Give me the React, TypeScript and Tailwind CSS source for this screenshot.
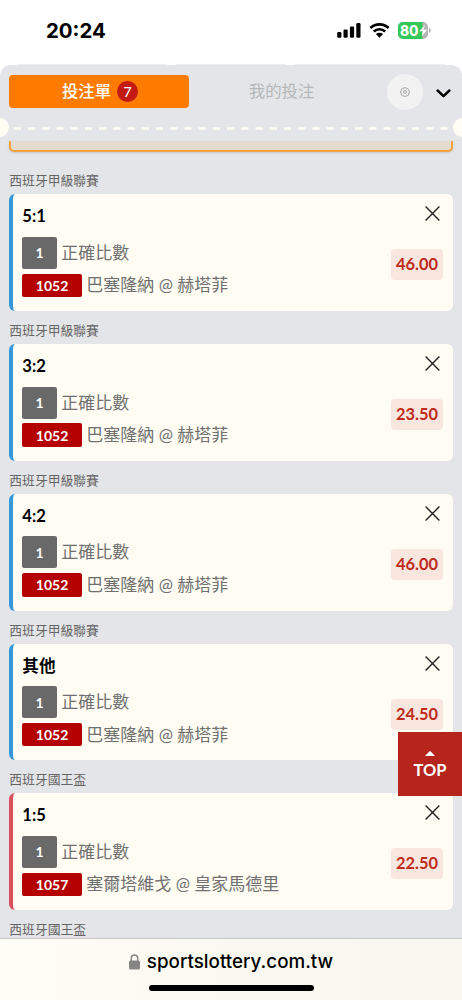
import React from "react";

type Bet = { league: string; pick: string; code: string; match: string; odds: string; accent: string };

const LA_LIGA = "西班牙甲級聯賽";
const COPA = "西班牙國王盃";
const BLUE = "border-[#3498db]";
const RED = "border-[#d9505c]";

const bets: Bet[] = [
  { league: LA_LIGA, pick: "5:1", code: "1052", match: "巴塞隆納 @ 赫塔菲", odds: "46.00", accent: BLUE },
  { league: LA_LIGA, pick: "3:2", code: "1052", match: "巴塞隆納 @ 赫塔菲", odds: "23.50", accent: BLUE },
  { league: LA_LIGA, pick: "4:2", code: "1052", match: "巴塞隆納 @ 赫塔菲", odds: "46.00", accent: BLUE },
  { league: LA_LIGA, pick: "其他", code: "1052", match: "巴塞隆納 @ 赫塔菲", odds: "24.50", accent: BLUE },
  { league: COPA, pick: "1:5", code: "1057", match: "塞爾塔維戈 @ 皇家馬德里", odds: "22.50", accent: RED },
];

function StatusBar() {
  return (
    <header className="flex h-16 shrink-0 items-start justify-between bg-white pl-[46px] pr-[31px] pt-[18px] font-['Inter','Liberation_Sans',sans-serif]">
      <span className="text-[20.4px] font-bold leading-[26px] text-black">20:24</span>
      <div className="flex h-[25px] items-center gap-[8px]">
        <svg className="h-[15px] w-[24px]" viewBox="0 0 24 15">
          <rect x="0.2" y="9" width="4.2" height="5.8" rx="1.2" />
          <rect x="6.5" y="6.6" width="4.2" height="8.2" rx="1.2" />
          <rect x="12.9" y="3.4" width="4.2" height="11.4" rx="1.2" />
          <rect x="19.3" y="0" width="4.2" height="14.8" rx="1.2" />
        </svg>
        <svg className="h-[15px] w-[21px]" viewBox="0 0 21 15">
          <g fill="none" stroke="#000" strokeWidth="2.7">
            <path d="M1.4 5.1C6.6 .2 14.4 .2 19.6 5.1" />
            <path d="M4.8 8.5C8 5.5 13 5.5 16.2 8.5" />
          </g>
          <path d="M10.5 14.7 6.9 11.1C8.9 9.4 12.1 9.4 14.1 11.1Z" />
        </svg>
        <svg className="h-[17px] w-[33px]" viewBox="0 0 33 17">
          <defs>
            <clipPath id="cell"><rect width="30" height="17" rx="5" /></clipPath>
          </defs>
          <g clipPath="url(#cell)">
            <rect width="30" height="17" fill="#b5b5b5" />
            <rect width="24.5" height="17" fill="#34c759" />
          </g>
          <path d="M31 5.8c2.3.9 2.3 4.2 0 5.2Z" fill="#b5b5b5" />
          <text x="2" y="13.6" fill="#fff" fontSize="14.5" fontWeight="800" textLength="18.5" lengthAdjust="spacingAndGlyphs">80</text>
          <path d="M27 3.2 21.3 9.3H24.8L23.6 14.2 29.3 7.8H25.6Z" fill="#fff" />
        </svg>
      </div>
    </header>
  );
}

function Gear() {
  return (
    <svg className="size-[10px]" viewBox="0 0 20 20" fill="none" stroke="#9a9a9a" strokeWidth="1.7">
      <path d="M8.3 1h3.4l.6 2.3 1.2.5 2-1.2 2.2 2.2-1.1 2 .5 1.3 2.2.5v3.2l-2.2.6-.5 1.2 1.1 2-2.2 2.2-2-1.1-1.2.5-.6 2.2H8.3l-.6-2.2-1.2-.5-2 1.1-2.2-2.2 1.1-2-.5-1.2-2.2-.6V8.6l2.2-.5.5-1.3-1.1-2 2.2-2.2 2 1.2 1.2-.5Z" />
      <circle cx="10" cy="10" r="3" />
    </svg>
  );
}

function Tabs() {
  return (
    <div className="flex h-[53px] shrink-0 items-center rounded-t-[11px] bg-[#e4e5e8] pl-[9.3px] pr-[11px]">
      <button className="flex h-[33px] w-[180px] items-center justify-center gap-[6px] rounded-[4px] bg-[#ff7b00] pl-[1.5px] text-[16.4px] font-medium text-white">
        投注單
        <span className="flex size-[21px] items-center justify-center rounded-full bg-[#c31b13] text-[14px]">7</span>
      </button>
      <button className="w-[185px] text-center text-[16.4px] font-normal text-[#b6b7b9]">我的投注</button>
      <button className="ml-[12.5px] flex size-[36px] shrink-0 items-center justify-center rounded-full bg-[#f2f2f2]">
        <Gear />
      </button>
      <svg className="ml-[13.5px] mt-1 h-[9px] w-[15px] shrink-0" viewBox="0 0 15 9" fill="none" stroke="#050505" strokeWidth="2.5" strokeLinecap="round" strokeLinejoin="round">
        <path d="M1.6 1.5 7.5 7.2 13.4 1.5" />
      </svg>
    </div>
  );
}

function Perforation() {
  return (
    <div className="flex h-[19px] shrink-0 items-center overflow-hidden">
      <span className="-ml-[9.7px] size-[19px] shrink-0 rounded-full bg-[#fffdf3]" />
      <svg className="mt-[1px] h-[3px] min-w-0 flex-1" preserveAspectRatio="none">
        <line x1="4.8" y1="1.5" x2="440" y2="1.5" stroke="#fffdf3" strokeWidth="2.6" strokeDasharray="7.1 7.12" />
      </svg>
      <span className="-mr-[9.7px] size-[19px] shrink-0 rounded-full bg-[#fffdf3]" />
    </div>
  );
}

function BetCard({ bet }: { bet: Bet }) {
  return (
    <section className="h-[149.75px] shrink-0">
      <h3 className="h-[33px] pt-[9px] text-[12.8px] leading-[20px] text-[#666]">{bet.league}</h3>
      <article className={`flex h-[116.75px] justify-between rounded-[6px] border-l-4 bg-[#fffdf3] pl-[9px] pr-[9.7px] ${bet.accent}`}>
        <div>
          <div className="mt-[10px] h-[24px] text-[16.6px] font-bold leading-[24px] text-black">{bet.pick}</div>
          <div className="mt-[8.7px] flex h-[32px] items-center gap-[4.5px]">
            <span className="flex h-[32px] w-[34.5px] items-center justify-center rounded-[2px] bg-[#696969] text-[14px] font-bold text-white">1</span>
            <span className="text-[17px] font-normal leading-[24px] text-[#707070]">正確比數</span>
          </div>
          <div className="mt-[4.7px] flex h-[23.5px] items-center gap-[4.5px]">
            <span className="flex h-[23.5px] w-[59.5px] items-center justify-center rounded-[2px] bg-[#b50000] text-[14px] font-bold text-white">{bet.code}</span>
            <span className="whitespace-nowrap text-[17px] font-normal leading-[24px] text-[#707070]">{bet.match}</span>
          </div>
        </div>
        <div className="flex flex-col items-end">
          <button className="mr-[2.7px] mt-[12px] size-[15px]" aria-label="移除">
            <svg className="size-[15px]" viewBox="0 0 15 15" stroke="#222" strokeWidth="1.4">
              <path d="M.6.6 14.4 14.4M14.4.6.6 14.4" />
            </svg>
          </button>
          <span className="mt-[28px] flex h-[31px] w-[52px] items-center justify-center rounded-[4px] bg-[#f8e6df] text-[16.4px] font-bold text-[#bf2c20]">{bet.odds}</span>
        </div>
      </article>
    </section>
  );
}

export default function App() {
  return (
    <div className="relative flex h-[1000px] w-[462px] flex-col overflow-hidden bg-white font-['Lato','Noto_Sans_CJK_TC',sans-serif]">
      <StatusBar />
      <div className="flex h-px shrink-0 gap-[9px] px-[17px]">
        <span className="w-[150px] bg-[#eeeff1]" />
        <span className="w-[110px] bg-[#eeeff1]" />
        <span className="flex-1 bg-[#eeeff1]" />
      </div>
      <Tabs />
      <main className="flex min-h-0 flex-1 flex-col bg-[#e4e5e8]">
        <Perforation />
        <div className="mx-[9.3px] mt-[4px] h-[11px] shrink-0 rounded-b-[5px] border-x-2 border-b-2 border-[#f5a140] bg-[#e6dbcf] shadow-sm" />
        <div className="mx-[9.3px] mt-[9.3px] flex min-h-0 flex-1 flex-col overflow-hidden">
          {bets.map((bet) => (
            <BetCard key={bet.league + bet.pick} bet={bet} />
          ))}
          <h3 className="pt-[9px] text-[12.8px] leading-[20px] text-[#666]">{COPA}</h3>
        </div>
      </main>
      <footer className="flex h-[62px] shrink-0 flex-col items-center border-t border-[#c5c5c8] bg-linear-to-r from-[#fffdf5] via-[#faf9f1] to-[#f9f8f0] font-['Inter','Liberation_Sans',sans-serif]">
        <div className="mt-[10px] flex h-[26px] items-center gap-[7px]">
          <svg className="h-[16px] w-[11px]" viewBox="0 0 11 16">
            <rect y="6.5" width="11" height="9" rx="1.6" fill="#858585" />
            <path d="M2.3 7V4.3C2.3-.1 8.7-.1 8.7 4.3V7" fill="none" stroke="#858585" strokeWidth="1.5" />
          </svg>
          <span className="text-[18.8px] font-medium leading-[26px] text-black">sportslottery.com.tw</span>
        </div>
        <div className="mt-[9.5px] h-[6px] w-[165px] rounded-full bg-black" />
      </footer>
      <button className="absolute right-0 top-[732px] flex h-[64px] w-[64px] flex-col items-center bg-[#b5251c] pt-[19px] text-white">
        <svg className="h-[5px] w-[10px]" viewBox="0 0 10 5" fill="#fff">
          <path d="M0 5 4.2.5Q5-.2 5.8.5L10 5Z" />
        </svg>
        <span className="mt-[4px] text-[16.4px] font-bold leading-[20px]">TOP</span>
      </button>
    </div>
  );
}
